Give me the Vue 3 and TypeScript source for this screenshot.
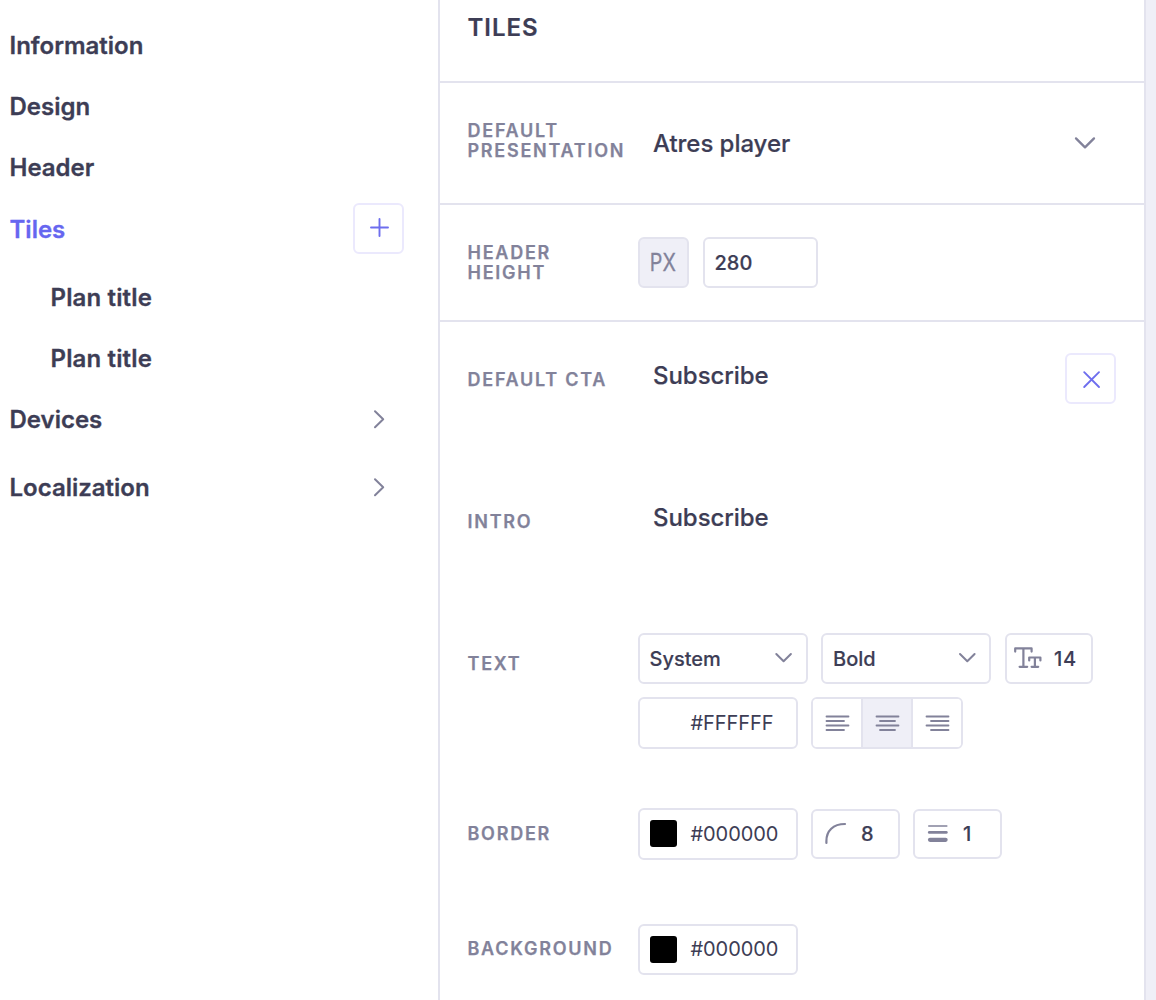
<script setup lang="ts">
import { ref } from 'vue'

interface NavItem {
  label: string
  child?: boolean
  add?: boolean
  expandable?: boolean
}

type Align = 'left' | 'center' | 'right'

const nav: NavItem[] = [
  { label: 'Information' },
  { label: 'Design' },
  { label: 'Header' },
  { label: 'Tiles', add: true },
  { label: 'Plan title', child: true },
  { label: 'Plan title', child: true },
  { label: 'Devices', expandable: true },
  { label: 'Localization', expandable: true },
]

const active = ref('Tiles')
const align = ref<Align>('center')

const alignIcons: { name: Align; path: string }[] = [
  { name: 'left', path: 'M1.5 2.5H23.5M1.5 7H19M1.5 11.5H23.5M1.5 16H19' },
  { name: 'center', path: 'M1.5 2.5H23.5M5 7H20M1.5 11.5H23.5M5 16H20' },
  { name: 'right', path: 'M1.5 2.5H23.5M6 7H23.5M1.5 11.5H23.5M6 16H23.5' },
]
</script>

<template>
  <div class="page">
    <nav class="sidebar">
      <a
        v-for="(item, i) in nav"
        :key="i"
        class="nav-item"
        :class="{ active: item.label === active, child: item.child, tall: item.add || item.expandable }"
      >
        <span>{{ item.label }}</span>
        <button v-if="item.add" class="square-btn">
          <svg width="20" height="20" viewBox="0 0 20 20"><path d="M10.5 2V19M2 10.5H19" /></svg>
        </button>
        <svg v-if="item.expandable" class="chev-right" width="14" height="20" viewBox="0 0 14 20">
          <path d="M3 2.3L11.2 10.3L3 18.3" />
        </svg>
      </a>
    </nav>

    <main class="panel">
      <header class="panel-head"><h1>TILES</h1></header>

      <section class="row presentation">
        <div class="label">DEFAULT<br />PRESENTATION</div>
        <div class="value">Atres player</div>
        <svg class="chev-down big" width="24" height="16" viewBox="0 0 24 16"><path d="M3 3.4L12 12.4L21 3.4" /></svg>
      </section>

      <section class="row height">
        <div class="label">HEADER<br />HEIGHT</div>
        <div class="controls">
          <div class="box unit"><span>PX</span></div>
          <div class="box height-input">280</div>
        </div>
      </section>

      <section class="cta">
        <div class="field tall-field">
          <div class="label">DEFAULT CTA</div>
          <div class="value">Subscribe</div>
          <button class="square-btn close">
            <svg width="20" height="20" viewBox="0 0 20 20"><path d="M3.2 3.2L18 18M18 3.2L3.2 18" /></svg>
          </button>
        </div>

        <div class="field intro-field">
          <div class="label">INTRO</div>
          <div class="value">Subscribe</div>
        </div>

        <div class="field text-field">
          <div class="label">TEXT</div>
          <div class="stack">
            <div class="controls">
              <div class="box select">
                <span>System</span>
                <svg class="chev-down" width="18" height="12" viewBox="0 0 18 12"><path d="M2.3 2L9.6 9.3L16.9 2" /></svg>
              </div>
              <div class="box select">
                <span>Bold</span>
                <svg class="chev-down" width="18" height="12" viewBox="0 0 18 12"><path d="M3 2L10.3 9.3L17.6 2" /></svg>
              </div>
              <div class="box size-input">
                <svg class="type-icon" width="28" height="22" viewBox="0 0 28 22">
                  <path d="M1.2 4.6V1.4H17.6V4.6M9.4 1.4V19.8M5.6 19.8H13.2M15.2 13.4V10.5H26.4V13.4M20.9 10.5V19.8M17.6 19.8H24.2" />
                </svg>
                <span>14</span>
              </div>
            </div>
            <div class="controls">
              <div class="box color"><i class="swatch white"></i><span>#FFFFFF</span></div>
              <div class="box aligns">
                <button
                  v-for="icon in alignIcons"
                  :key="icon.name"
                  :class="{ on: icon.name === align }"
                  @click="align = icon.name"
                >
                  <svg width="24" height="18" viewBox="0 0 24 18"><path :d="icon.path" /></svg>
                </button>
              </div>
            </div>
          </div>
        </div>

        <div class="field border-field">
          <div class="label">BORDER</div>
          <div class="controls">
            <div class="box color"><i class="swatch"></i><span>#000000</span></div>
            <div class="box number">
              <svg class="radius-icon" width="22" height="22" viewBox="0 0 22 22"><path d="M1.4 20V18C1.4 8 8 1 20 1" /></svg>
              <span>8</span>
            </div>
            <div class="box number weight">
              <svg class="weight-icon" width="22" height="18" viewBox="0 0 22 18">
                <path d="M1.8 1H19.8" stroke-width="1.6" />
                <path d="M2.3 7.4H19.3" stroke-width="2.8" />
                <path d="M3 14.8H18.6" stroke-width="4.2" />
              </svg>
              <span>1</span>
            </div>
          </div>
        </div>

        <div class="field background-field">
          <div class="label">BACKGROUND</div>
          <div class="controls">
            <div class="box color"><i class="swatch"></i><span>#000000</span></div>
          </div>
        </div>
      </section>
    </main>
  </div>
</template>

<style>
body {
  margin: 0;
  background: #efeff7;
}
</style>

<style scoped>
* {
  box-sizing: border-box;
}
.page {
  display: flex;
  height: 1000px;
  overflow: hidden;
  background: #efeff7;
  color: #3d3d55;
  font-family: Inter, "Liberation Sans", sans-serif;
  font-size: 24px;
}
svg {
  display: block;
  flex: none;
  fill: none;
  stroke: #82829a;
  stroke-width: 2;
  stroke-linecap: round;
  stroke-linejoin: round;
  overflow: visible;
}
button {
  padding: 0;
  font: inherit;
}
.sidebar {
  width: 438px;
  flex: none;
  padding: 15px 34px 0 9.5px;
  background: #fff;
}
.nav-item {
  display: flex;
  align-items: center;
  justify-content: space-between;
  height: 61px;
  font-weight: 600;
  -webkit-text-stroke: 0.3px currentColor;
}
.nav-item.tall {
  margin-bottom: 7px;
}
.nav-item.child {
  padding-left: 41px;
  letter-spacing: 0.15px;
}
.nav-item.active {
  height: 62px;
  color: #6666f0;
}
.chev-right {
  margin: -1px 18px 0 0;
}
.square-btn {
  display: flex;
  align-items: center;
  justify-content: center;
  width: 51px;
  height: 51px;
  border: 2px solid #ebe9fd;
  border-radius: 6px;
  background: #fff;
}
.nav-item .square-btn {
  margin-top: -2px;
}
.nav-item .square-btn svg {
  margin: -2px 0 0 1px;
}
.square-btn svg {
  stroke: #6e6eee;
  stroke-width: 1.9;
}
.panel {
  width: 708px;
  flex: none;
  border: solid #e3e3ee;
  border-width: 0 2px;
  background: #fff;
}
.panel-head {
  height: 83px;
  border-bottom: 2px solid #e3e3ee;
  padding: 13px 27.5px 0;
}
h1 {
  margin: 0;
  font-size: 24px;
  line-height: 30px;
  font-weight: 600;
  letter-spacing: 0.95px;
  -webkit-text-stroke: 0.2px currentColor;
}
.row {
  display: flex;
  align-items: center;
  border-bottom: 2px solid #e3e3ee;
  padding: 0 28px 0 27.5px;
}
.presentation {
  height: 122px;
}
.height {
  height: 117px;
}
.label {
  width: 170.5px;
  flex: none;
  color: #82829a;
  font-size: 18px;
  line-height: 20px;
  font-weight: 600;
  letter-spacing: 1.75px;
  white-space: nowrap;
  -webkit-text-stroke: 0.25px currentColor;
}
.presentation .label {
  margin-top: -4px;
}
.value {
  flex: 1;
  padding-left: 15px;
  line-height: 30px;
  font-weight: 500;
  letter-spacing: -0.05px;
  -webkit-text-stroke: 0.2px currentColor;
}
.presentation .value {
  margin-top: 2px;
}
.big {
  margin-right: 19px;
}
.chev-down.big {
  stroke-width: 2.3;
}
.controls {
  display: flex;
  gap: 14px;
}
.box {
  display: flex;
  align-items: center;
  height: 51px;
  border: 2px solid #e3e3ee;
  border-radius: 6px;
  background: #fff;
  font-size: 20px;
  font-weight: 500;
}
.unit {
  width: 51px;
  justify-content: center;
  background: #efeff7;
  color: #82829a;
  font-size: 24px;
  font-weight: 400;
  -webkit-text-stroke: 0.3px currentColor;
}
.unit span {
  margin-left: -1px;
  transform: scaleX(0.82);
}
.height-input {
  width: 115px;
  padding: 1px 0 0 9.5px;
  -webkit-text-stroke: 0.2px currentColor;
}
.select,
.size-input,
.number {
  -webkit-text-stroke: 0.15px currentColor;
}
.cta {
  padding: 31px 28px 0 27.5px;
}
.field {
  display: flex;
  align-items: flex-start;
}
.tall-field {
  height: 142px;
}
.tall-field .label,
.intro-field .label {
  margin-top: 17px;
}
.tall-field .value,
.intro-field .value {
  margin-top: 8px;
}
.intro-field {
  height: 138px;
}
.text-field {
  height: 175px;
}
.text-field .label {
  margin-top: 21px;
}
.stack {
  display: flex;
  flex-direction: column;
  gap: 13px;
}
.select {
  width: 170px;
  justify-content: space-between;
  padding: 0 14px 0 9.5px;
}
.select + .select {
  margin-left: -1px;
  padding-left: 10px;
}
.select .chev-down {
  margin-top: -2px;
}
.size-input {
  width: 88px;
  padding-left: 7px;
  gap: 12px;
}
.size-input span {
  letter-spacing: 0.8px;
}
.type-icon {
  margin-top: -2px;
  stroke-width: 2.2;
}
.color {
  width: 160px;
  height: 52px;
  padding-left: 10px;
  gap: 13.5px;
  font-weight: 400;
  letter-spacing: -0.08px;
}
.swatch {
  width: 27px;
  height: 27px;
  border-radius: 3px;
  background: #000;
}
.border-field .swatch {
  margin-top: -1px;
}
.swatch.white {
  background: #fff;
}
.stack .controls:last-child,
.border-field .controls {
  gap: 13px;
}
.aligns {
  width: 152px;
  height: 52px;
  overflow: hidden;
}
.aligns button {
  display: flex;
  flex: 1;
  height: 100%;
  align-items: center;
  justify-content: center;
  border: 0;
  background: #fff;
}
.aligns button + button {
  border-left: 2px solid #e3e3ee;
}
.aligns button.on {
  background: #efeff7;
}
.aligns svg {
  stroke-width: 1.8;
}
.border-field {
  height: 116px;
}
.border-field .label {
  margin-top: 16px;
}
.number {
  width: 89px;
  height: 50px;
  margin-top: 1px;
  padding-left: 12px;
  gap: 14px;
}
.radius-icon {
  stroke-width: 2.2;
}
.background-field .label {
  margin-top: 15px;
}
.background-field .color {
  height: 51px;
}
.background-field .color span {
  margin-top: -1px;
}
</style>
